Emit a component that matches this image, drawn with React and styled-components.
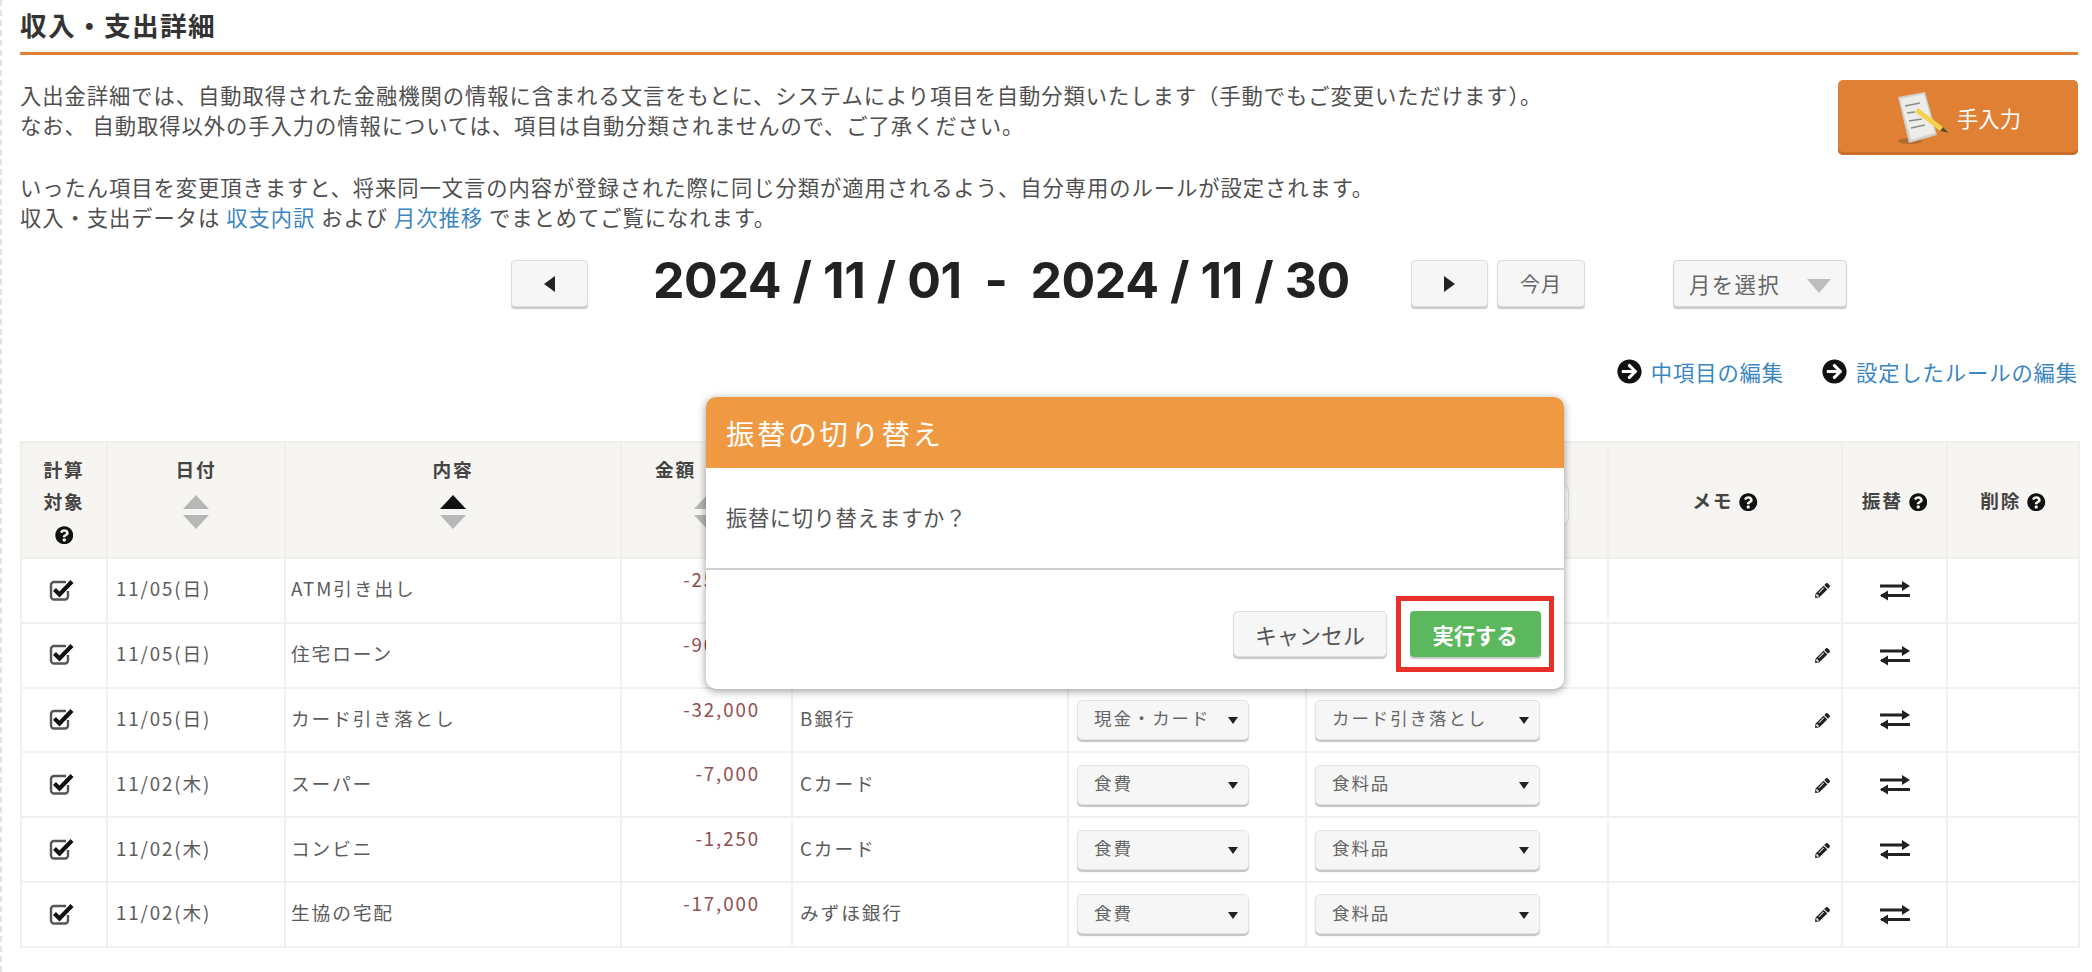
import React from 'react';
import styled, { createGlobalStyle } from 'styled-components';
import { FaQuestionCircle, FaPencilAlt, FaArrowCircleRight } from 'react-icons/fa';

const GlobalStyle = createGlobalStyle`
  html, body {
    margin: 0;
    padding: 0;
    background: #fff;
  }
  body {
    font-family: "Noto Sans CJK JP", "Liberation Sans", sans-serif;
    color: #4a4a4a;
  }
`;

const Page = styled.div`
  position: relative;
  width: 2092px;
  height: 972px;
  box-sizing: border-box;
  padding: 0 14px 0 20px;
  overflow: hidden;
  &::before {
    content: '';
    position: absolute;
    left: 0;
    top: 0;
    bottom: 0;
    border-left: 2px dashed #e2e2e2;
  }
`;

const Title = styled.h1`
  margin: 0;
  height: 52px;
  line-height: 50px;
  font-size: 26.7px;
  font-weight: 700;
  letter-spacing: 1.3px;
  color: #333;
  border-bottom: 3px solid #e08035;
`;

const Intro = styled.div`
  display: flex;
  justify-content: space-between;
  align-items: flex-start;
  margin-top: 25px;
`;

const IntroText = styled.div`
  font-size: 21.3px;
  line-height: 30px;
  letter-spacing: 0.95px;
  color: #4f4f4f;
  p {
    margin: 0 0 32px;
  }
  p:last-child {
    margin: 0;
  }
`;

const TextLink = styled.a`
  color: #3b86c0;
  text-decoration: none;
  margin: 0 6px;
`;

const ManualButton = styled.button`
  display: flex;
  align-items: center;
  justify-content: center;
  gap: 6px;
  width: 240px;
  height: 75px;
  padding: 0;
  border: 0;
  border-radius: 5px;
  background: #e08035;
  box-shadow: inset 0 -3px 0 #c96d28;
  color: #fff;
  font-family: inherit;
  font-size: 21.3px;
`;

const DateNav = styled.div`
  display: flex;
  align-items: center;
  height: 47px;
  margin: 28px 0 0 491px;
`;

const NavButton = styled.button`
  display: flex;
  align-items: center;
  justify-content: center;
  width: ${p => p.$width || 77}px;
  height: 47px;
  margin-left: ${p => p.$gap || 0}px;
  padding: 0;
  border: 1px solid #ddd;
  border-radius: 4px;
  background: #f6f6f6;
  box-shadow: 0 2px 1px #c9c9c9;
  color: #666;
  font-family: inherit;
  font-size: 20px;
  letter-spacing: 1px;
`;

const NavArrow = styled.span`
  width: 0;
  height: 0;
  border-top: 8px solid transparent;
  border-bottom: 8px solid transparent;
  ${p => (p.$left ? 'border-right: 11px solid #222;' : 'border-left: 11px solid #222;')}
`;

const DateRange = styled.div`
  width: 687px;
  margin-left: 65px;
  margin-top: -6px;
  font-family: Inter, "Liberation Sans", sans-serif;
  font-size: 50px;
  font-weight: 700;
  color: #222;
  white-space: pre;
  line-height: 47px;
  letter-spacing: -0.4px;
`;

const MonthSelect = styled.div`
  display: flex;
  align-items: center;
  justify-content: space-between;
  box-sizing: border-box;
  width: 174px;
  height: 47px;
  margin-left: 88px;
  padding: 0 15px;
  border: 1px solid #d5d5d5;
  border-radius: 4px;
  background: #f6f6f6;
  box-shadow: 0 2px 1px #c9c9c9;
  color: #666;
  font-size: 21.3px;
  letter-spacing: 1.5px;
`;

const MonthCaret = styled.span`
  width: 0;
  height: 0;
  margin-top: 4px;
  border-left: 12px solid transparent;
  border-right: 12px solid transparent;
  border-top: 14px solid #bdbdbd;
`;

const Links = styled.div`
  display: flex;
  justify-content: flex-end;
  align-items: center;
  gap: 38px;
  height: 28px;
  margin-top: 50px;
`;

const EditLink = styled.a`
  display: flex;
  align-items: center;
  gap: 9px;
  color: #3b86c0;
  font-size: 21.3px;
  letter-spacing: 0.9px;
  white-space: nowrap;
  svg {
    color: #111;
    font-size: 25px;
  }
`;

const Table = styled.table`
  width: 2058px;
  margin-top: 56px;
  border-collapse: collapse;
  table-layout: fixed;
  font-size: 18.7px;
  letter-spacing: 1.9px;
  color: #5c5c5c;
`;

const Head = styled.th`
  height: 116px;
  box-sizing: border-box;
  padding: ${p => (p.$middle ? '0' : '10px 0 0')};
  border: 2px solid #f0efec;
  background: #f7f5f1;
  color: #444;
  font-weight: 700;
  line-height: 32px;
  text-align: center;
  vertical-align: ${p => (p.$middle ? 'middle' : 'top')};
`;

const HelpIcon = styled(FaQuestionCircle)`
  color: #111;
  font-size: 18.5px;
  vertical-align: -3px;
  margin-left: ${p => p.$gap || 0}px;
`;

const AmountLabel = styled.span`
  margin-right: 62px;
`;

const SortBox = styled.div`
  display: flex;
  flex-direction: column;
  align-items: center;
  gap: 6px;
  margin-top: 10px;
`;

const SortArrow = styled.span`
  width: 0;
  height: 0;
  border-left: 13px solid transparent;
  border-right: 13px solid transparent;
  ${p => (p.$up
    ? `border-bottom: 14px solid ${p.$active ? '#111' : '#b7b7b7'};`
    : 'border-top: 14px solid #b7b7b7;')}
`;

const FilterPill = styled.div`
  width: 120px;
  height: 43px;
  margin: 29px 38px 0 auto;
  border: 1px solid #ddd;
  border-radius: 10px;
  background: #fff;
`;

const Row = styled.tr`
  height: 64.8px;
`;

const Cell = styled.td`
  box-sizing: border-box;
  padding: 0 0 4px ${p => p.$pad || 0}px;
  border: 2px solid #f1f1f1;
  line-height: 30px;
  white-space: nowrap;
`;

const CheckCell = styled(Cell)`
  padding: 0 5px 6px 0;
  text-align: center;
  svg {
    vertical-align: middle;
  }
`;

const AmountCell = styled(Cell)`
  padding: 5px 31px 0 0;
  text-align: right;
  vertical-align: top;
  color: #8f5050;
`;

const SelectCell = styled(Cell)`
  padding: 0 0 0 8px;
`;

const IconCell = styled(Cell)`
  padding: 0 ${p => p.$right || 0}px 5px 0;
  text-align: ${p => (p.$right ? 'right' : 'center')};
  color: #222;
  svg {
    vertical-align: middle;
  }
`;

const RowSelect = styled.div`
  display: flex;
  align-items: center;
  justify-content: space-between;
  box-sizing: border-box;
  width: ${p => p.$width}px;
  height: 40px;
  padding: 0 10px 3px 16px;
  border: 1px solid #e2e2e2;
  border-radius: 5px;
  background: #f6f6f6;
  box-shadow: 0 2px 1px #c4c4c4;
  font-size: 17.5px;
  color: #666;
`;

const Caret = styled.span`
  width: 0;
  height: 0;
  margin-top: 5px;
  border-left: 5.5px solid transparent;
  border-right: 5.5px solid transparent;
  border-top: 7px solid #222;
`;

const Modal = styled.div`
  position: absolute;
  left: 706px;
  top: 397px;
  display: flex;
  flex-direction: column;
  width: 858px;
  height: 292px;
  border-radius: 10px;
  background: #fff;
  box-shadow: 0 2px 8px rgba(0, 0, 0, 0.4);
  overflow: hidden;
`;

const ModalHeader = styled.div`
  display: flex;
  align-items: center;
  height: 71px;
  padding-left: 20px;
  background: #ef9a42;
  color: #fff;
  font-size: 28.5px;
  letter-spacing: 2.6px;
`;

const ModalBody = styled.div`
  display: flex;
  align-items: center;
  box-sizing: border-box;
  height: 102px;
  padding: 0 0 4px 20px;
  border-bottom: 2px solid #cfcfcf;
  font-size: 21.3px;
  letter-spacing: 0.6px;
  color: #555;
`;

const ModalFooter = styled.div`
  display: flex;
  justify-content: flex-end;
  align-items: center;
  gap: 9px;
  flex: 1;
  padding: 9px 10px 0 0;
`;

const CancelButton = styled.button`
  width: 154px;
  height: 46px;
  padding: 0;
  border: 1px solid #ddd;
  border-radius: 5px;
  background: #f6f6f6;
  box-shadow: 0 2px 1px #c9c9c9;
  color: #555;
  font-family: inherit;
  font-size: 22px;
`;

const Highlight = styled.div`
  display: flex;
  align-items: center;
  justify-content: center;
  box-sizing: border-box;
  width: 158px;
  height: 76px;
  border: 5px solid #e8302a;
`;

const ConfirmButton = styled.button`
  width: 131px;
  height: 46px;
  padding: 0;
  border: 0;
  border-radius: 4px;
  background: #5cb85c;
  box-shadow: 0 2px 1px #c9c9c9;
  color: #fff;
  font-family: inherit;
  font-size: 21.3px;
  font-weight: 700;
`;

const MemoIcon = () => (
  <svg width="56" height="56" viewBox="0 0 56 56" aria-hidden="true">
    <ellipse cx="15" cy="51" rx="12" ry="3" fill="#8f5a2c" opacity="0.6" />
    <path d="M3 7 L30 2 L42 45 L14 53 Z" fill="#cfcfcb" />
    <path d="M5 9 L29 4 L40 43 L16 50 Z" fill="#ecece8" />
    <path d="M10 16 L25 13 M12 23 L20 22 M14 31 L27 29 M16 38 L30 35" stroke="#8c8c8c" strokeWidth="1.6" />
    <path d="M23 18 L48 37 L54 43 L45 41 L20 22 Z" fill="#f4d24e" />
    <path d="M48 37 L54 43 L45 41 Z" fill="#5b4a2a" />
  </svg>
);

const CheckIcon = () => (
  <svg width="26" height="25" viewBox="0 0 26 25" aria-hidden="true">
    <path
      d="M19 13v5.5a3 3 0 0 1-3 3H5a3 3 0 0 1-3-3V7a3 3 0 0 1 3-3h12"
      fill="none"
      stroke="#555"
      strokeWidth="2.4"
    />
    <path d="M5.5 11.5 L10.5 16.5 L23 3.5" fill="none" stroke="#111" strokeWidth="4.2" />
  </svg>
);

const TransferIcon = () => (
  <svg width="30" height="20" viewBox="0 0 30 20" aria-hidden="true">
    <path d="M0 5 H24 M1 14.5 H30" stroke="#222" strokeWidth="3" fill="none" />
    <path d="M22 0 L30 5 L22 10 Z M8 9.5 L0 14.5 L8 19.5 Z" fill="#222" />
  </svg>
);

const rows = [
  { date: '11/05(日)', text: 'ATM引き出し', amount: '-25,000' },
  { date: '11/05(日)', text: '住宅ローン', amount: '-90,000' },
  { date: '11/05(日)', text: 'カード引き落とし', amount: '-32,000', source: 'B銀行', major: '現金・カード', minor: 'カード引き落とし' },
  { date: '11/02(木)', text: 'スーパー', amount: '-7,000', source: 'Cカード', major: '食費', minor: '食料品' },
  { date: '11/02(木)', text: 'コンビニ', amount: '-1,250', source: 'Cカード', major: '食費', minor: '食料品' },
  { date: '11/02(木)', text: '生協の宅配', amount: '-17,000', source: 'みずほ銀行', major: '食費', minor: '食料品' },
];

const widths = [86, 178, 336, 171, 276, 238, 302, 234, 105, 132];

const Sort = ({ active }) => (
  <SortBox>
    <SortArrow $up $active={active} />
    <SortArrow />
  </SortBox>
);

export default function App() {
  return (
    <Page>
      <GlobalStyle />
      <Title>収入・支出詳細</Title>

      <Intro>
        <IntroText>
          <p>
            入出金詳細では、自動取得された金融機関の情報に含まれる文言をもとに、システムにより項目を自動分類いたします（手動でもご変更いただけます）。
            <br />
            なお、 自動取得以外の手入力の情報については、項目は自動分類されませんので、ご了承ください。
          </p>
          <p>
            いったん項目を変更頂きますと、将来同一文言の内容が登録された際に同じ分類が適用されるよう、自分専用のルールが設定されます。
            <br />
            収入・支出データは<TextLink>収支内訳</TextLink>および<TextLink>月次推移</TextLink>でまとめてご覧になれます。
          </p>
        </IntroText>
        <ManualButton>
          <MemoIcon />
          手入力
        </ManualButton>
      </Intro>

      <DateNav>
        <NavButton><NavArrow $left /></NavButton>
        <DateRange>2024 / 11 / 01  -  2024 / 11 / 30</DateRange>
        <NavButton $gap={71}><NavArrow /></NavButton>
        <NavButton $gap={9} $width={88}>今月</NavButton>
        <MonthSelect>
          月を選択
          <MonthCaret />
        </MonthSelect>
      </DateNav>

      <Links>
        <EditLink><FaArrowCircleRight />中項目の編集</EditLink>
        <EditLink><FaArrowCircleRight />設定したルールの編集</EditLink>
      </Links>

      <Table>
        <colgroup>
          {widths.map((w, i) => <col key={i} style={{ width: w }} />)}
        </colgroup>
        <thead>
          <tr>
            <Head>計算<br />対象<br /><HelpIcon /></Head>
            <Head>日付<Sort /></Head>
            <Head>内容<Sort active /></Head>
            <Head>
              <AmountLabel>金額</AmountLabel>
              <Sort />
            </Head>
            <Head />
            <Head />
            <Head><FilterPill /></Head>
            <Head $middle>メモ<HelpIcon $gap={6} /></Head>
            <Head $middle>振替<HelpIcon $gap={6} /></Head>
            <Head $middle>削除<HelpIcon $gap={6} /></Head>
          </tr>
        </thead>
        <tbody>
          {rows.map((r, i) => (
            <Row key={i}>
              <CheckCell><CheckIcon /></CheckCell>
              <Cell $pad={8}>{r.date}</Cell>
              <Cell $pad={5}>{r.text}</Cell>
              <AmountCell>{r.amount}</AmountCell>
              <Cell $pad={7}>{r.source}</Cell>
              <SelectCell>
                {r.major && <RowSelect $width={172}>{r.major}<Caret /></RowSelect>}
              </SelectCell>
              <SelectCell>
                {r.minor && <RowSelect $width={225}>{r.minor}<Caret /></RowSelect>}
              </SelectCell>
              <IconCell $right={11}><FaPencilAlt size={15} /></IconCell>
              <IconCell><TransferIcon /></IconCell>
              <Cell />
            </Row>
          ))}
        </tbody>
      </Table>

      <Modal>
        <ModalHeader>振替の切り替え</ModalHeader>
        <ModalBody>振替に切り替えますか？</ModalBody>
        <ModalFooter>
          <CancelButton>キャンセル</CancelButton>
          <Highlight>
            <ConfirmButton>実行する</ConfirmButton>
          </Highlight>
        </ModalFooter>
      </Modal>
    </Page>
  );
}
